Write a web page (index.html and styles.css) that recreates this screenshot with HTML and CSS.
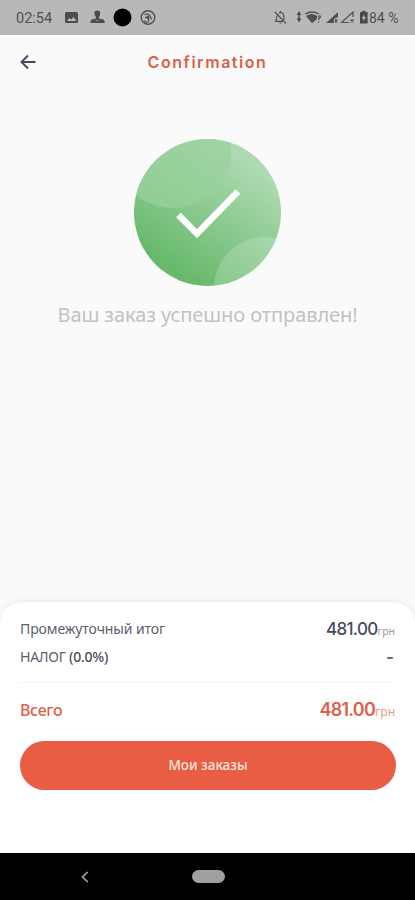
FILE: index.html
```html
<!DOCTYPE html>
<html lang="ru">
<head>
<meta charset="utf-8">
<title>Confirmation</title>
<link rel="stylesheet" href="styles.css">
</head>
<body>
<div class="screen">
  <div class="status">
    <span class="clock">02:54</span>
    <svg class="status-left" width="94" height="20" viewBox="0 0 94 20">
      <path fill="#4c4c4c" fill-rule="evenodd" d="M2.500 4h10q1.500 0 1.500 1.500v8q0 1.500-1.500 1.500h-10q-1.500 0-1.500-1.500v-8q0-1.500 1.500-1.500zM3 13h9.500l-3-4-2.300 2.500-1.700-1.500z"/>
      <path fill="#4c4c4c" d="M30.500 3.500q3-1.800 5.500 0v3.100q-.2 2-1 2.400v1.300l4.300 1.200q1.500.5 1.500 3.500h-14.500q0-3 1.500-3.500l4.300-1.200V9q-1.400-.5-1.600-2.400z"/>
      <path d="M31.500 11.500l1.900 1.800 1.900-1.800" fill="none" stroke="#999" stroke-width=".8"/>
      <circle cx="58.500" cy="9.500" r="9"/>
      <circle cx="84" cy="9.500" r="6.800" fill="none" stroke="#505050" stroke-width="1.400"/>
      <path d="M80.500 6.500q6-1.500 7 5M80 12.500q1.500 2.500 5 1M81 9.500q3-1 4 3.500" fill="none" stroke="#505050" stroke-width="1.200"/>
      <circle cx="84" cy="9.500" r="1.700" fill="#505050"/>
    </svg>
    <svg class="status-right" width="94" height="20" viewBox="0 0 94 20">
      <g fill="none" stroke="#505050" stroke-width="1.200">
        <path d="M1 4l11 11.500M3.300 7.500q-.8 1-.8 4l-1 1.800h7.500M5 5q4-1.500 4.900 3v4M5.500 15h2M6.500 4V3"/>
        <path d="M75 14.500h-7.500L79 4v5M76.500 11.500l3 3m0-3l-3 3M61 11.500l2.500 3m0-3l-2.500 3"/>
        <path d="M31 6q7-4 14 0" stroke-width="1.400"/>
        <path d="M44 8.500q2.500-1.500 2.500.5l-1.800 1.800v1.200m0 1.200v1.300"/>
      </g>
      <path fill="#505050" d="M32 8q6-4 11 0v3l-5 4.200zM25 3l2.500 4h-1.700v3.500h1.700l-2.500 4-2.500-4h1.700V7h-1.700zM52 15L64 4v5l-4 2v4z"/>
      <path fill="#484848" d="M86 4h2.200V2.700h3.200V4h2.200v11.500H86z"/>
      <path fill="#b8b8b8" d="M90.300 6.200l-2.500 4.300h1.500v3l2.600-4.400h-1.600z"/>
    </svg>
    <span class="battery">84 %</span>
  </div>
  <header class="appbar">
    <svg class="back" width="16" height="16" viewBox="0 0 16 16"><path d="M15.500 8H1.500M8 1.500L1.500 8 8 14.500" fill="none" stroke="#414966" stroke-width="1.900"/></svg>
    <h1 class="title">Confirmation</h1>
  </header>
  <main class="content">
    <svg class="success" width="147" height="147" viewBox="0 0 147 147">
      <defs>
        <linearGradient id="green" gradientUnits="userSpaceOnUse" x1="36" y1="127" x2="111" y2="20">
          <stop offset="0" stop-color="#68b96c"/><stop offset="1" stop-color="#aedab2"/>
        </linearGradient>
        <clipPath id="disc"><circle cx="73.500" cy="73.500" r="73.500"/></clipPath>
      </defs>
      <g clip-path="url(#disc)">
        <rect width="147" height="147" fill="url(#green)"/>
        <path d="M0 0H97V23A60 60 0 0 1 0 55Z" fill="#98d19d" fill-opacity=".72"/>
        <circle cx="131" cy="149" r="51" fill="#fff" fill-opacity=".19"/>
      </g>
      <path d="M44.500 76L63 94.700 104 52.500" fill="none" stroke="#fff" stroke-width="6.500"/>
    </svg>
    <p class="message">Ваш заказ успешно отправлен!</p>
  </main>
  <section class="sheet">
    <div class="row"><span class="label">Промежуточный итог</span><span class="price">481.00<small>грн</small></span></div>
    <div class="row tax"><span class="label">НАЛОГ <b>(0.0%)</b></span><span class="dash">-</span></div>
    <div class="divider"></div>
    <div class="row total"><span class="label">Всего</span><span class="price">481.00<small>грн</small></span></div>
    <button class="orders">Мои заказы</button>
  </section>
  <nav class="navbar">
    <svg class="nav-back" width="8" height="12" viewBox="0 0 8 12"><path d="M6.800 1L1.500 6l5.300 5" fill="none" stroke="#a2a2a2" stroke-width="1.700"/></svg>
    <span class="home"></span>
  </nav>
</div>
</body>
</html>
```
FILE: styles.css
```css
* { box-sizing: border-box; }
body { margin: 0; font-family: "Noto Sans", sans-serif; }
.screen { width: 415px; height: 900px; display: flex; flex-direction: column; background: #fafafa; overflow: hidden; }
.status { height: 35px; flex: none; display: flex; align-items: center; padding-left: 16px; background: #b8b8b8; color: #505050; font: 14.5px/35px Roboto, sans-serif; }
.clock { width: 48px; padding-top: 1px; }
.status-left { flex: none; margin-top: 1px; }
.status-right { flex: none; margin-left: 116px; margin-top: 1px; }
.battery { margin-left: 1px; padding-top: 1px; font-size: 14px; white-space: nowrap; }
.appbar { height: 55px; flex: none; border-top: 2px solid #fff; padding-bottom: 3px; display: grid; grid-template-columns: 60px 1fr 60px; align-items: center; }
.back { margin-left: 20px; }
.title { margin: 0; text-align: center; color: #dc5f49; font: 600 16px/24px Inter, sans-serif; letter-spacing: 1.55px; }
.content { flex: 1; display: flex; flex-direction: column; align-items: center; padding-top: 49px; }
.success { flex: none; }
.message { margin: 14px 0 0; color: #bfc3c5; font-size: 20px; line-height: 30px; letter-spacing: -.08px; white-space: nowrap; }
.sheet { height: 251px; flex: none; padding: 13px 20px 0; background: #fff; border-radius: 22px 22px 0 0; box-shadow: 0 -2px 6px rgba(0,0,0,.055); }
.row { display: flex; justify-content: space-between; align-items: center; height: 28px; color: #5a6070; font-size: 14px; white-space: nowrap; }
.row .label { margin-top: -2px; letter-spacing: -.1px; }
.price { font: 500 17px/28px Inter, sans-serif; color: #454b63; letter-spacing: -.65px; }
.price small { font: 10.5px "Noto Sans", sans-serif; color: #9699a3; letter-spacing: 0; }
.label b { font-weight: 500; color: #4a4f5a; }
.tax .label { letter-spacing: -.25px; }
.dash { padding-right: 1px; font: 600 17px Inter, sans-serif; }
.divider { height: 1px; margin-top: 11px; background: #f4f4f4; }
.total { margin-top: 13px; color: #e05f4a; font-size: 16px; font-weight: 500; }
.total .label { margin-top: 0; letter-spacing: -.35px; }
.total .price { color: #e05f4a; font-size: 18px; font-weight: 600; letter-spacing: -.75px; }
.total small { color: #e69b8e; font-size: 12px; }
.orders { display: block; width: 376px; height: 49px; margin-top: 17px; padding: 0; border: 0; border-radius: 25px; background: #e95d44; color: #fce5df; font: 500 13.5px/49px "Noto Sans", sans-serif; }
.navbar { height: 47px; flex: none; display: flex; align-items: center; padding-left: 81px; background: #000; }
.home { width: 33px; height: 13px; margin-left: 103px; border-radius: 7px; background: #a0a0a0; }
```
